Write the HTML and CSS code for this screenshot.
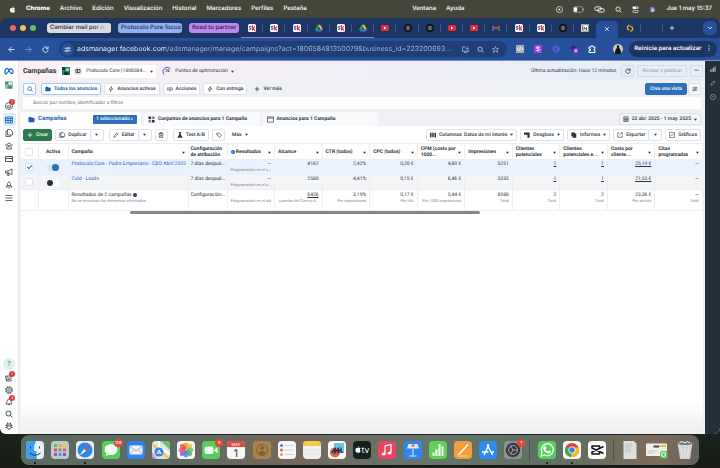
FILE: index.html
```html
<!DOCTYPE html>
<html lang="es">
<head>
  <meta charset="UTF-8">
  <meta name="viewport" content="width=device-width, initial-scale=1.0">
  <title>Administrador de anuncios</title>
  <link rel="stylesheet" href="styles.css">
</head>
<body>
  <!-- Iconos compartidos -->
  <svg class="sprite" aria-hidden="true">
    <symbol id="apple" viewBox="0 0 16 16"><path fill="currentColor" d="M11 1c0 2-1.400 3-3 3 0-2 1.500-3 3-3zM8 5c1 0 1.500-.8 3-.8 1.200 0 2.200.6 2.800 1.500-2.500 1.500-2 5 .5 6-.7 1.800-2 3.500-3.300 3.500-1 0-1.500-.6-2.700-.6s-1.700.6-2.600.6C3.500 15.200 2 11.800 2 9.300 2 6 4 4.200 6 4.200c1 0 1.500.8 2 .8z"/></symbol>
    <symbol id="caret" viewBox="0 0 8 8"><path fill="currentColor" d="M0 2h8L4 7z"/></symbol>
    <symbol id="lupa" viewBox="0 0 16 16"><g fill="none" stroke="currentColor" stroke-width="2"><circle cx="7" cy="7" r="5"/><path d="M11 11l4 4"/></g></symbol>
    <symbol id="carpeta" viewBox="0 0 16 16"><path fill="currentColor" d="M1 4q0-2 2-2h4l2 2h4q2 0 2 2v6q0 2-2 2H3q-2 0-2-2z"/></symbol>
    <symbol id="rayo" viewBox="0 0 16 16"><path fill="none" stroke="currentColor" stroke-width="1.500" d="M9 1L3 9h4l-1 6 7-8H9z"/></symbol>
    <symbol id="sk" viewBox="0 0 16 16"><rect width="16" height="16" rx="3" fill="#fff"/><path d="M7 5Q2 3 2 6t4 2q2 3-4 3" fill="none" stroke="#3d55b8" stroke-width="2"/><path d="M9 2v11M14 5l-4 4 4 4" fill="none" stroke="#e0374a" stroke-width="2.200"/></symbol>
    <symbol id="drive" viewBox="0 0 16 16"><path fill="#f5bd26" d="M5.500 1.500h5L16 11h-5z"/><path fill="#22a45a" d="M5.500 1.500L8 6l-5 9-3-4z"/><path fill="#3c7de8" d="M5 11h11l-3 4H3z"/></symbol>
    <symbol id="youtube" viewBox="0 0 16 16"><rect y="2" width="16" height="12" rx="3" fill="#ee2737"/><path fill="#fff" d="M6 5l5 3-5 3z"/></symbol>
    <symbol id="gpt" viewBox="0 0 16 16"><circle cx="8" cy="8" r="8" fill="#0d1014"/><g fill="none" stroke="#a9adb0"><circle cx="8" cy="8" r="4"/><path d="M5 5l6 6M11 5l-6 6M8 4v8"/></g></symbol>
    <symbol id="gmail" viewBox="0 0 16 16"><path fill="none" stroke="#3c7de8" stroke-width="3" d="M2 14V5"/><path fill="none" stroke="#22a45a" stroke-width="3" d="M14 14V5"/><path fill="none" stroke="#ea4335" stroke-width="3" d="M1.500 4L8 9l6.500-5"/></symbol>
    <symbol id="notion" viewBox="0 0 16 16"><rect width="16" height="16" rx="2" fill="#ddd"/><path d="M3 2l10-1 2 3v10l-10 1-2-3z" fill="#fff" stroke="#222"/><path d="M6 12V6l5 6V6" fill="none" stroke="#222" stroke-width="1.500"/></symbol>
    <symbol id="refrescar" viewBox="0 0 16 16"><path fill="none" stroke="currentColor" stroke-width="2" d="M13 5a6 6 0 1 0 1 4M14 1v5H9"/></symbol>
    <symbol id="mas" viewBox="0 0 16 16"><path stroke="currentColor" stroke-width="2" d="M8 2v12M2 8h12"/></symbol>
    <symbol id="equis" viewBox="0 0 16 16"><path stroke="currentColor" stroke-width="2" d="M3 3l10 10M13 3L3 13"/></symbol>
    <symbol id="lapiz" viewBox="0 0 16 16"><path fill="none" stroke="currentColor" stroke-width="1.500" d="M2 14l1-4 8-8 3 3-8 8zM9 4l3 3"/></symbol>
    <symbol id="ajustes" viewBox="0 0 16 16"><g fill="none" stroke="currentColor" stroke-width="1.800"><path d="M1 5h7M12 5h3M1 11h3M8 11h7"/><circle cx="10" cy="5" r="2"/><circle cx="6" cy="11" r="2"/></g></symbol>
    <symbol id="grafico" viewBox="0 0 16 16"><path fill="none" stroke="currentColor" stroke-width="1.500" d="M1 1h14v14H1zM4 11l3-4 2 2 4-5"/></symbol>
    <symbol id="calendario" viewBox="0 0 16 16"><path fill="none" stroke="currentColor" stroke-width="1.500" d="M2 2h12v13H2zM2 6h12M2 10h12M6 6v9M10 6v9"/></symbol>
    <symbol id="paginas" viewBox="0 0 16 16"><path fill="none" stroke="currentColor" stroke-width="1.700" d="M5 1h6l4 4v7H5zM5 4H2v11h9v-3"/></symbol>
  </svg>

  <header class="menubar">
    <svg class="ic"><use href="#apple"/></svg>
    <nav class="menu-izq">
      <b>Chrome</b><span>Archivo</span><span>Edición</span><span>Visualización</span><span>Historial</span><span>Marcadores</span><span>Perfiles</span><span>Pestaña</span>
    </nav>
    <nav class="menu-der"><span>Ventana</span><span>Ayuda</span></nav>
    <div class="menu-estado">
      <svg class="ic" viewBox="0 0 16 16"><circle cx="8" cy="8" r="7" fill="none" stroke="#fff" stroke-width="1.500"/><path fill="#fff" d="M6 5l5 3-5 3z"/></svg>
      <svg class="ic-ancho" viewBox="0 0 24 14"><rect x="1" y="1" width="20" height="12" rx="3" fill="none" stroke="#aaa" stroke-width="1.500"/><rect x="2" y="2" width="7" height="10" rx="2" fill="#fff"/><path d="M23 5v4" stroke="#aaa" stroke-width="2"/></svg>
      <svg class="ic-ancho" viewBox="0 0 24 16"><g fill="none" stroke="#fff" stroke-width="2"><rect x="1" y="2" width="15" height="8" rx="4"/><rect x="8" y="6" width="15" height="8" rx="4"/></g></svg>
      <svg class="ic"><use href="#lupa"/></svg>
      <svg class="ic" viewBox="0 0 16 16"><rect x="1" y="1" width="14" height="6" rx="3" fill="#fff"/><rect x="2" y="10" width="12" height="5" rx="2" fill="none" stroke="#fff" stroke-width="1.500"/><circle cx="11" cy="4" r="2" fill="#555"/></svg>
      <svg class="ic" viewBox="0 0 16 16"><circle cx="8" cy="8" r="7" fill="#4c5a9c"/><path fill="#e45a8e" d="M2 5q6-6 12 2L8 9z"/><path fill="#62d5dc" d="M3 12l5-5 6 3q-5 7-11 2z"/><circle cx="8" cy="8" r="2" fill="#fff"/></svg>
      <time>Jue 1 may 15:37</time>
    </div>
  </header>

  <div class="ventana">
    <div class="pestanas">
      <div class="semaforo"><i class="rojo"></i><i class="amarillo"></i><i class="verde"></i></div>
      <div class="grupos">
        <span class="grupo gris">Cambiar mail por otro</span>
        <span class="grupo azul">Protocolo Pure focus</span>
        <span class="grupo lila">Road to partner</span>
      </div>
      <div class="lista-pestanas">
        <span class="pes en-grupo"><svg><use href="#sk"/></svg></span>
        <span class="pes en-grupo"><svg><use href="#sk"/></svg></span>
        <span class="pes en-grupo"><svg><use href="#sk"/></svg></span>
        <span class="pes en-grupo"><svg><use href="#drive"/></svg></span>
        <span class="pes en-grupo"><svg><use href="#sk"/></svg></span>
        <span class="pes en-grupo"><svg><use href="#drive"/></svg></span>
        <span class="pes"><svg><use href="#youtube"/></svg></span>
        <span class="pes"><svg><use href="#gpt"/></svg></span>
        <span class="pes"><svg><use href="#gpt"/></svg></span>
        <span class="pes"><svg><use href="#youtube"/></svg></span>
        <span class="pes"><svg><use href="#youtube"/></svg></span>
        <span class="pes"><svg><use href="#gmail"/></svg></span>
        <span class="pes"><svg><use href="#sk"/></svg></span>
        <span class="pes"><svg><use href="#sk"/></svg></span>
        <span class="pes"><svg><use href="#gpt"/></svg></span>
        <span class="pes sin-linea"><svg><use href="#notion"/></svg></span>
        <span class="pes activa"><button aria-label="Cerrar pestaña"><svg><use href="#equis"/></svg></button></span>
        <span class="pes"><svg viewBox="0 0 16 16"><path fill="none" stroke="#e9b62c" stroke-width="2.500" d="M7 2L3 5v5l4 2M8 4l5 3v5l-4 3"/></svg></span>
        <span class="pes"></span>
      </div>
      <button class="nueva" aria-label="Nueva pestaña"><svg><use href="#mas"/></svg></button>
      <button class="buscar-pes" aria-label="Buscar pestañas"><svg viewBox="0 0 16 16"><path fill="none" stroke="currentColor" stroke-width="2.500" d="M3 5l5 5 5-5"/></svg></button>
    </div>

    <div class="barra">
      <button aria-label="Atrás"><svg viewBox="0 0 16 16"><path fill="none" stroke="currentColor" stroke-width="2" d="M15 8H2M8 2L2 8l6 6"/></svg></button>
      <button class="apagado" aria-label="Adelante"><svg viewBox="0 0 16 16"><path fill="none" stroke="currentColor" stroke-width="2" d="M1 8h13M8 2l6 6-6 6"/></svg></button>
      <button aria-label="Recargar"><svg><use href="#refrescar"/></svg></button>
      <div class="direccion">
        <span class="info"><svg><use href="#ajustes"/></svg></span>
        <input class="url" type="text" aria-label="Dirección" value="adsmanager.facebook.com/adsmanager/manage/campaigns?act=180658481350079&amp;business_id=22320069388...">
        <svg viewBox="0 0 16 16"><path fill="none" stroke="currentColor" stroke-width="1.700" d="M8 2H1v10h14V9M5 15h6M12 1v6M9 5l3 3 3-3"/></svg>
        <svg><use href="#lupa"/></svg>
        <svg viewBox="0 0 16 16"><path fill="none" stroke="currentColor" stroke-width="1.500" d="M8 1l2 5h5l-4 3 2 6-5-4-5 4 2-6-4-3h5z"/></svg>
      </div>
      <div class="extensiones">
        <svg viewBox="0 0 16 16"><rect width="16" height="16" rx="1" fill="#a9b0b8"/><path d="M5 5L2 8l3 3M11 5l3 3-3 3M9 4l-2 8" fill="none" stroke="#fff" stroke-width="1.500"/></svg>
        <svg viewBox="0 0 16 16"><rect width="16" height="16" rx="2" fill="#9a4be0"/><path d="M11 5Q5 2 5 6q6 2 6 4-1 3-6 1" fill="none" stroke="#fff" stroke-width="2"/></svg>
        <svg viewBox="0 0 16 16"><circle cx="8" cy="8" r="5" fill="none" stroke="#5560e6" stroke-width="5" stroke-dasharray="3 1"/></svg>
        <svg viewBox="0 0 16 16"><path fill="#32209a" d="M7 0l7 6-7 6-7-6z"/><rect x="7" y="7" width="9" height="9" rx="2" fill="#9c42c9"/><path fill="none" stroke="#fff" d="M10 9.500h3v4h-3zM10 11.500h3"/></svg>
        <svg viewBox="0 0 16 16"><path fill="none" stroke="#fff" stroke-width="2" d="M2 4h4V2h4v2h4v4h-2v3h2v4H2v-4h3V8H2z"/></svg>
      </div>
      <svg class="perfil" viewBox="0 0 20 20"><circle cx="10" cy="10" r="10" fill="#cfc7b8"/><path d="M4 19q0-9 4-11-1-6 2-6t2 6q4 2 4 11-6 2-12 0z" fill="#15171a"/></svg>
      <button class="reiniciar">Reinicia para actualizar <span>⋮</span></button>
    </div>

    <div class="pagina">
      <aside class="lateral">
        <div class="grupo-lat">
          <svg class="meta" viewBox="0 0 20 14"><path fill="none" stroke="#1769e0" stroke-width="2.500" d="M2 10C2 0 7 0 10 6s8 8 8 3-4-10-8-3-8 9-8 4z"/></svg>
          <svg class="avatar" viewBox="0 0 16 16"><rect width="16" height="16" rx="2" fill="#9fcabb"/><path fill="#4c8a79" d="M0 2h6v5H0zM5 9h9v6H5z"/><path fill="#e4f2ea" d="M8 3h6v4H8z"/></svg>
        </div>
        <div class="grupo-lat crece">
          <span class="con-globo"><svg viewBox="0 0 16 16"><g fill="none" stroke="currentColor" stroke-width="1.700"><circle cx="8" cy="8" r="7"/><path d="M4 8h8q-1 4-4 4t-4-4z"/></g></svg><em>1</em></span>
          <span class="marcado"><svg viewBox="0 0 16 16"><path fill="none" stroke="currentColor" stroke-width="1.700" d="M1 2h14v12H1zM1 5h14M1 9h14M6 5v9M11 5v9"/></svg></span>
          <svg><use href="#paginas"/></svg>
          <svg viewBox="0 0 16 16"><g fill="none" stroke="currentColor" stroke-width="1.700"><circle cx="8" cy="5" r="3"/><path d="M3 14q0-5 5-5t5 5zM3 9Q0 5 3 4M13 9q3-4 0-5"/></g></svg>
          <svg viewBox="0 0 16 16"><path fill="none" stroke="currentColor" stroke-width="2" d="M1 3h14v10H1zM1 7h14"/></svg>
          <svg viewBox="0 0 16 16"><path fill="none" stroke="currentColor" stroke-width="1.700" d="M1 6h5l8-4v11l-8-3H1zM4 10l1 5h3l-1-5M6 6v4"/></svg>
          <svg viewBox="0 0 16 16"><path fill="none" stroke="currentColor" stroke-width="1.700" d="M8 1q4 3 3 8H5Q4 4 8 1zM5 8l-3 4h4M11 8l3 4h-4M8 10v5"/></svg>
          <svg viewBox="0 0 16 16"><path stroke="currentColor" stroke-width="1.700" d="M1 3h14M1 8h14M1 13h14"/></svg>
        </div>
        <div class="grupo-lat abajo">
          <span class="ayuda">?</span>
          <span class="con-globo"><svg viewBox="0 0 16 16"><path fill="none" stroke="currentColor" stroke-width="1.700" d="M1 4h11v10H3zM4 4v10M6 8h4M6 11h4"/></svg><em>1</em></span>
          <svg viewBox="0 0 16 16"><g fill="none" stroke="currentColor"><circle cx="8" cy="8" r="6.500" stroke-width="2.500" stroke-dasharray="3.500 1.500"/><circle cx="8" cy="8" r="5"/><circle cx="8" cy="8" r="2.500" stroke-width="1.500"/></g></svg>
          <span class="con-globo"><svg viewBox="0 0 16 16"><path fill="none" stroke="currentColor" stroke-width="1.700" d="M2 12q2-2 2-6 1-4 4-4t4 4q0 4 2 6zM6 12q2 4 4 0"/></svg><em>4</em></span>
          <svg><use href="#lupa"/></svg>
          <svg viewBox="0 0 16 16"><path fill="none" stroke="currentColor" stroke-width="2" d="M4 4h8v7q-4 7-8 0zM4 7H1M15 7h-3M4 11H1M15 11h-3M5 4V1M11 4V1M4 8h8"/></svg>
        </div>
      </aside>

      <main>
        <div class="cabecera">
          <h1>Campañas</h1>
          <div class="cuenta">
            <svg class="avatar" viewBox="0 0 16 16"><rect width="16" height="16" fill="#2b8069"/><path fill="#0d3b33" d="M0 0h6v6H0zM4 10h9v6H4z"/><path fill="#a8e0c8" d="M7 3h7v5H9z"/></svg>
            <svg viewBox="0 0 16 16"><circle cx="8" cy="8" r="8" fill="#e1e4e8"/><path fill="none" stroke="#333" stroke-width="1.500" d="M4 5h8v6H4zM7 5v6"/></svg>
            <select aria-label="Cuenta publicitaria"><option>Protocolo Core (1806584...</option></select>
            <svg class="caret"><use href="#caret"/></svg>
          </div>
          <div class="puntos">
            <span class="nota"><svg viewBox="0 0 20 20"><path fill="none" stroke="#2b63c9" stroke-width="2" d="M4 17A8.500 8.500 0 1 1 17 6"/></svg><b>76</b></span>
            Puntos de optimización <svg class="caret"><use href="#caret"/></svg>
          </div>
          <span class="actualizado">Última actualización: Hace 12 minutos</span>
          <button class="btn cuadrado" aria-label="Actualizar"><svg><use href="#refrescar"/></svg></button>
          <button class="btn publicar" disabled>Revisar y publicar</button>
          <button class="btn cuadrado" aria-label="Más opciones">•••</button>
        </div>

        <div class="filtros">
          <button class="btn cuadrado borde-azul" aria-label="Buscar"><svg><use href="#lupa"/></svg></button>
          <button class="btn borde-azul elegido"><svg><use href="#carpeta"/></svg>Todos los anuncios</button>
          <button class="btn"><svg><use href="#rayo"/></svg>Anuncios activos</button>
          <button class="btn"><svg viewBox="0 0 16 16"><g fill="none" stroke="currentColor" stroke-width="1.500"><path d="M3 13Q0 8 3 3M13 13q3-5 0-10"/><circle cx="8" cy="7" r="3"/><path d="M8 8v7"/></g></svg>Acciones</button>
          <button class="btn"><svg><use href="#rayo"/></svg>Con entrega</button>
          <button class="btn plano"><svg><use href="#mas"/></svg>Ver más</button>
          <button class="btn primario derecha">Crea una vista</button>
          <button class="btn cuadrado pegado" aria-label="Personalizar"><svg><use href="#ajustes"/></svg></button>
        </div>

        <input class="buscador" type="search" aria-label="Buscar" placeholder="Buscar por nombre, identificador o filtros">

        <div class="niveles">
          <div class="nivel actual"><svg><use href="#carpeta"/></svg>Campañas <button class="seleccion">1 seleccionado <svg><use href="#equis"/></svg></button></div>
          <div class="nivel"><svg viewBox="0 0 16 16"><path fill="currentColor" d="M1 1h6v6H1zM9 9h6v6H9z"/><path fill="none" stroke="currentColor" stroke-width="1.500" d="M10 2h4v4h-4zM2 10h4v4H2z"/></svg>Conjuntos de anuncios para 1 Campaña</div>
          <div class="nivel"><svg viewBox="0 0 16 16"><path fill="none" stroke="currentColor" stroke-width="1.500" d="M1 2h14v12H1zM1 5h14"/></svg>Anuncios para 1 Campaña</div>
          <button class="btn fechas"><svg><use href="#calendario"/></svg>22 abr. 2025 - 1 may. 2025 <svg class="caret"><use href="#caret"/></svg></button>
        </div>

        <div class="panel">
          <div class="acciones">
            <button class="btn crear"><svg><use href="#mas"/></svg>Crear</button>
            <div class="doble">
              <button class="btn"><svg><use href="#paginas"/></svg>Duplicar</button><button class="btn" aria-label="Opciones de duplicar"><svg class="caret"><use href="#caret"/></svg></button>
            </div>
            <div class="doble separado">
              <button class="btn"><svg><use href="#lapiz"/></svg>Editar</button><button class="btn" aria-label="Opciones de editar"><svg class="caret"><use href="#caret"/></svg></button>
            </div>
            <button class="btn cuadrado" aria-label="Eliminar"><svg viewBox="0 0 16 16"><path fill="none" stroke="currentColor" stroke-width="1.700" d="M2 4h12M6 4V1h4v3M3 4l1 11h8l1-11M7 7v5M9 7v5"/></svg></button>
            <button class="btn separado"><svg viewBox="0 0 16 16"><path fill="currentColor" d="M5 0h6v2h-1v4l5 9H1l5-9V2H5z"/></svg>Test A/B</button>
            <button class="btn cuadrado" aria-label="Etiquetas"><svg viewBox="0 0 16 16"><path fill="none" stroke="currentColor" stroke-width="1.500" d="M2 3h7l6 6-5 5-8-6z"/><circle cx="5" cy="6" r="1" fill="currentColor"/></svg></button>
            <button class="btn plano">Más <svg class="caret"><use href="#caret"/></svg></button>
            <button class="btn derecha"><svg viewBox="0 0 16 16"><path fill="currentColor" d="M0 2h4v12H0zM6 2h4v12H6zM12 2h4v12h-4z"/></svg>Columnas: Datos de mi interés <svg class="caret"><use href="#caret"/></svg></button>
            <button class="btn"><svg viewBox="0 0 16 16"><path fill="currentColor" d="M0 1h15v14h-6V7H0z"/></svg>Desglose <svg class="caret"><use href="#caret"/></svg></button>
            <button class="btn"><svg viewBox="0 0 16 16"><path fill="currentColor" d="M1 1h9v3h4v11H5v-3H1z"/></svg>Informes <svg class="caret"><use href="#caret"/></svg></button>
            <div class="doble">
              <button class="btn"><svg viewBox="0 0 16 16"><path fill="none" stroke="currentColor" stroke-width="1.500" d="M7 2H2v12h12V9M10 2h4v4M14 2L7 9"/></svg>Exportar</button><button class="btn" aria-label="Opciones de exportar"><svg class="caret"><use href="#caret"/></svg></button>
            </div>
            <button class="btn"><svg><use href="#grafico"/></svg>Gráficos</button>
          </div>

          <table>
            <colgroup>
              <col class="c-marca"><col class="c-activa"><col class="c-nombre"><col class="c-config"><col span="10">
            </colgroup>
            <thead>
              <tr>
                <th><input type="checkbox" class="casilla" aria-label="Seleccionar todo"></th>
                <th class="centro">Activa</th>
                <th class="orden">Campaña<svg class="caret"><use href="#caret"/></svg></th>
                <th class="fija">Configuración de atribución</th>
                <th class="orden"><i class="punto-info">i</i> Resultados<svg class="caret"><use href="#caret"/></svg></th>
                <th class="orden">Alcance<svg class="caret"><use href="#caret"/></svg></th>
                <th class="orden">CTR (todos)<svg class="caret"><use href="#caret"/></svg></th>
                <th class="orden">CPC (todos)<svg class="caret"><use href="#caret"/></svg></th>
                <th class="orden">CPM (costo por<br>1000...<svg class="caret"><use href="#caret"/></svg></th>
                <th class="orden">Impresiones<svg class="caret"><use href="#caret"/></svg></th>
                <th class="orden">Clientes<br>potenciales<svg class="caret"><use href="#caret"/></svg></th>
                <th class="orden">Clientes<br>potenciales e...<svg class="caret"><use href="#caret"/></svg></th>
                <th class="orden">Costo por<br>cliente...<svg class="caret"><use href="#caret"/></svg></th>
                <th class="orden">Citas<br>programadas<svg class="caret"><use href="#caret"/></svg></th>
              </tr>
            </thead>
            <tbody>
              <tr class="fila-marcada">
                <td><input type="checkbox" class="casilla" aria-label="Seleccionar Protocolo Core" checked></td>
                <td><input type="checkbox" role="switch" class="interruptor" aria-label="Activar Protocolo Core" checked></td>
                <td><a href="#">Protocolo Core - Padre Empresario - CBO Abril 2025</a></td>
                <td class="fija">7 días despué...</td>
                <td class="num">—<small class="izq">Programación en el s...</small></td>
                <td class="num">4167</td><td class="num">2,42%</td><td class="num">0,20 €</td><td class="num">4,80 €</td><td class="num">5251</td>
                <td class="num"><u>1</u></td><td class="num"><u>1</u></td><td class="num"><u>25,19 €</u></td><td class="num">—</td>
              </tr>
              <tr class="fila-gris">
                <td><input type="checkbox" class="casilla" aria-label="Seleccionar Cold - Leads"></td>
                <td><input type="checkbox" role="switch" class="interruptor" aria-label="Activar Cold - Leads"></td>
                <td><a href="#">Cold - Leads</a></td>
                <td class="fija">7 días despué...</td>
                <td class="num">—<small class="izq">Programación en el s...</small></td>
                <td class="num">2560</td><td class="num">4,41%</td><td class="num">0,15 €</td><td class="num">6,46 €</td><td class="num">3335</td>
                <td class="num"><u>1</u></td><td class="num"><u>1</u></td><td class="num"><u>21,53 €</u></td><td class="num">—</td>
              </tr>
            </tbody>
            <tfoot>
              <tr>
                <td></td><td></td>
                <td>Resultados de 2 campañas <i class="punto-info oscuro">i</i><small>No se muestran los elementos eliminados</small></td>
                <td class="fija">Configuración...</td>
                <td class="num">&nbsp;<small>Programación en el siti</small></td>
                <td class="num"><u>6426</u><small>cuentas del Centro d...</small></td>
                <td class="num">3,19%<small>Por impresiones</small></td>
                <td class="num">0,17 €<small>Por clic</small></td>
                <td class="num">5,44 €<small>Por 1000 impresiones</small></td>
                <td class="num">8586<small>Total</small></td>
                <td class="num">2<small>Total</small></td>
                <td class="num">2<small>Total</small></td>
                <td class="num">23,36 €<small>Por acción</small></td>
                <td class="num">—<small>Total</small></td>
              </tr>
            </tfoot>
          </table>
          <div class="desplazamiento"><i></i></div>
        </div>
      </main>

      <aside class="herramientas">
        <svg viewBox="0 0 16 16"><path fill="currentColor" d="M0 10h3v5H0zM4 7h3v8H4zM8 4h3v11H8zM12 1h3v14h-3z"/></svg>
        <svg><use href="#lapiz"/></svg>
        <svg viewBox="0 0 16 16"><g fill="none" stroke="currentColor" stroke-width="1.500"><circle cx="8" cy="8" r="7"/><path d="M4 4l4 4h4"/></g></svg>
      </aside>
    </div>
  </div>

  <footer class="dock">
    <span class="app abierta"><svg viewBox="0 0 36 36"><rect width="36" height="36" rx="8" fill="#e9eef4"/><path fill="#3aa0f2" d="M8 0h12q-5 9-4 20h5q-1 9 1 16H8q-8 0-8-8V8q0-8 8-8z"/><path fill="none" stroke="#24384f" stroke-width="2" d="M9 11v4M27 11v4M7 24q11 9 22 0"/></svg></span>
    <span class="app"><svg viewBox="0 0 36 36"><rect width="36" height="36" rx="8" fill="#c3c9c8"/><g stroke-width="6"><path stroke="#54bd5d" d="M6 9h6"/><path stroke="#f2a53c" d="M15 9h6"/><path stroke="#f0c93f" d="M24 9h6"/><path stroke="#e2514f" d="M6 18h6"/><path stroke="#8d8d93" d="M15 18h6"/><path stroke="#ef5b6d" d="M24 18h6"/><path stroke="#8f55d6" d="M6 27h6"/><path stroke="#3da4e8" d="M15 27h6"/><path stroke="#3c77e0" d="M24 27h6"/></g></svg></span>
    <span class="app abierta"><svg viewBox="0 0 36 36"><rect width="36" height="36" rx="8" fill="#e9edf0"/><circle cx="18" cy="18" r="15" fill="#2b8ae6"/><path fill="#f2483e" d="M29 7L16 16l4 4z"/><path fill="#fff" d="M7 29l9-13 4 4z"/></svg></span>
    <span class="app"><svg viewBox="0 0 36 36"><rect width="36" height="36" rx="8" fill="#55cf59"/><ellipse cx="18" cy="17" rx="13" ry="11" fill="#f5fff5"/><path fill="#f5fff5" d="M9 24l-2 6 8-3z"/></svg><em>126</em></span>
    <span class="app"><svg viewBox="0 0 36 36"><rect width="36" height="36" rx="8" fill="#2f86ee"/><rect x="5" y="9" width="26" height="18" rx="2" fill="#eef3f8"/><path d="M5 10l13 10 13-10M5 27l9-10M31 27l-9-10" fill="none" stroke="#8b9aaa" stroke-width="1.500"/></svg></span>
    <span class="app"><svg viewBox="0 0 36 36"><rect width="36" height="36" rx="8" fill="#dfe5df"/><path fill="#62c566" d="M12 0h16q8 0 8 8v10L20 2z"/><path fill="#e58bc7" d="M0 22l10 14H8q-8 0-8-8z"/><path fill="none" stroke="#f3c84b" stroke-width="5" d="M2 8l30 26"/><path fill="none" stroke="#fff" stroke-width="4" d="M14 0v12l22 14"/><circle cx="14" cy="22" r="9" fill="#2f86ee"/><path d="M10 26l4-8 4 8M11 24h6" fill="none" stroke="#fff" stroke-width="2"/></svg></span>
    <span class="app"><svg viewBox="0 0 36 36"><rect width="36" height="36" rx="8" fill="#f8f8f6"/><g fill-opacity=".85"><ellipse cx="18" cy="10" rx="5" ry="7" fill="#f39a33"/><ellipse cx="24" cy="12" rx="5" ry="7" fill="#dfc937" transform="rotate(45 24 12)"/><ellipse cx="26" cy="18" rx="7" ry="5" fill="#8cc152"/><ellipse cx="24" cy="24" rx="5" ry="7" fill="#43b488" transform="rotate(-45 24 24)"/><ellipse cx="18" cy="26" rx="5" ry="7" fill="#4b8fdd"/><ellipse cx="12" cy="24" rx="5" ry="7" fill="#8b62c9" transform="rotate(45 12 24)"/><ellipse cx="10" cy="18" rx="7" ry="5" fill="#d85d9c"/><ellipse cx="12" cy="12" rx="5" ry="7" fill="#e95445" transform="rotate(-45 12 12)"/></g></svg></span>
    <span class="app"><svg viewBox="0 0 36 36"><rect width="36" height="36" rx="8" fill="#55cf59"/><rect x="5" y="11" width="18" height="15" rx="4" fill="#effbef"/><path fill="#effbef" d="M25 17l6-5v13l-6-5z"/></svg><em>5</em></span>
    <span class="app"><svg viewBox="0 0 36 36"><rect width="36" height="36" rx="8" fill="#f7f7f7"/><path fill="#e24a41" d="M8 0h20q8 0 8 8v4H0V8q0-8 8-8z"/><text x="18" y="9" font-size="8" fill="#fff" text-anchor="middle">MAY</text><text x="18" y="32" font-size="21" fill="#333" text-anchor="middle">1</text></svg></span>
    <span class="app"><svg viewBox="0 0 36 36"><rect width="36" height="36" rx="8" fill="#a98249"/><circle cx="18" cy="18" r="11" fill="none" stroke="#7f5f32" stroke-width="2"/><circle cx="18" cy="14" r="4" fill="#7f5f32"/><path fill="#7f5f32" d="M10 25q8-11 16 0-8 6-16 0z"/><path stroke="#5fae73" stroke-width="2" d="M35 8v5M35 24v5"/></svg></span>
    <span class="app"><svg viewBox="0 0 36 36"><rect width="36" height="36" rx="8" fill="#f7f7f7"/><path stroke="#d2d2d2" stroke-width="2" d="M13 9h19M13 18h19M13 27h19"/><circle cx="7" cy="9" r="3" fill="#3d7fe8"/><circle cx="7" cy="18" r="3" fill="#e55a4f"/><circle cx="7" cy="27" r="3" fill="#f29a3a"/></svg></span>
    <span class="app"><svg viewBox="0 0 36 36"><rect width="36" height="36" rx="8" fill="#efefed"/><path fill="#f5cb45" d="M8 0h20q8 0 8 8v2H0V8q0-8 8-8z"/><path stroke="#d5d3cc" d="M3 18h30M3 26h30"/></svg></span>
    <span class="app"><svg viewBox="0 0 36 36"><rect width="36" height="36" rx="8" fill="#fafafa"/><path fill="#6ac6e6" d="M12 4h20v18H12z"/><circle cx="14" cy="23" r="10" fill="#e9674e"/><path fill="none" stroke="#1f2f4d" stroke-width="2.500" d="M7 24l8-10-2 10 8-9-1 8 6-7v7l5-1"/></svg></span>
    <span class="app"><svg viewBox="0 0 36 36"><rect width="36" height="36" rx="8" fill="#15211f"/><use href="#apple" x="3" y="10" width="14" height="14" color="#fff"/><text x="17" y="24" font-size="17" fill="#fff">tv</text></svg></span>
    <span class="app"><svg viewBox="0 0 36 36"><rect width="36" height="36" rx="8" fill="#ea4460"/><path fill="none" stroke="#fff" stroke-width="2.500" d="M14 26V10l12-3v16"/><ellipse cx="11" cy="26" rx="4" ry="3" fill="#fff"/><ellipse cx="23" cy="24" rx="4" ry="3" fill="#fff"/></svg></span>
    <span class="app"><svg viewBox="0 0 36 36"><rect width="36" height="36" rx="8" fill="#2f86ee"/><path fill="#dceafa" d="M9 6h18l3 9H6z"/><path stroke="#dceafa" stroke-width="2" d="M18 15v14M11 30h14"/><circle cx="18" cy="9" r="3" fill="#d87a47"/></svg></span>
    <span class="app"><svg viewBox="0 0 36 36"><rect width="36" height="36" rx="8" fill="#5fd256"/><path stroke="#fff" stroke-width="4" d="M9 30v-7M15 30V17M21 30V6M27 30V11"/></svg></span>
    <span class="app"><svg viewBox="0 0 36 36"><rect width="36" height="36" rx="8" fill="#f2a03b"/><path stroke="#fff" stroke-width="3" d="M9 28L28 7"/><path stroke="#f8dbb1" stroke-width="2" d="M8 30h20"/></svg></span>
    <span class="app"><svg viewBox="0 0 36 36"><rect width="36" height="36" rx="8" fill="#2c8af0"/><path fill="none" stroke="#fff" stroke-width="3" d="M20 7L10 28M16 7l11 21M6 22h13M24 22h6"/></svg></span>
    <span class="app"><svg viewBox="0 0 36 36"><rect width="36" height="36" rx="8" fill="#8d9192"/><circle cx="18" cy="18" r="13" fill="#35393c" stroke="#24282a" stroke-width="3" stroke-dasharray="2 1"/><circle cx="18" cy="18" r="9" fill="none" stroke="#a2a6a8" stroke-width="2"/><path d="M18 18h10M18 18l-5-9M18 18l-5 9" stroke="#a2a6a8" stroke-width="2"/></svg><em>1</em></span>
    <i class="division"></i>
    <span class="app abierta"><svg viewBox="0 0 36 36"><rect width="36" height="36" rx="8" fill="#55cf59"/><path d="M6 30l2-7a12 12 0 1 1 5 5z" fill="none" stroke="#fff" stroke-width="2.500"/><path fill="#fff" d="M13 10l3 1 1 4-2 2q1 3 5 4l2-2 4 2q-1 5-6 4-9-3-10-11z"/></svg></span>
    <span class="app abierta"><svg viewBox="0 0 36 36"><rect width="36" height="36" rx="8" fill="#f7f7f7"/><circle cx="18" cy="18" r="14" fill="#e44336"/><path fill="#35a853" d="M18 18L6 11a14 14 0 0 0 10 21z"/><path fill="#fabd14" d="M18 18L16 32a14 14 0 0 0 15-19H18z"/><circle cx="18" cy="18" r="7" fill="#fff"/><circle cx="18" cy="18" r="5.500" fill="#3f80eb"/></svg></span>
    <span class="app"><svg viewBox="0 0 36 36"><rect width="36" height="36" rx="8" fill="#fafafa"/><path fill="none" stroke="#111" stroke-width="3" stroke-linejoin="round" d="M31 11L8 22v4h15v-3M31 25L8 14v-4h15v3"/></svg></span>
    <i class="division"></i>
    <span class="app"><svg viewBox="0 0 36 36"><path fill="#dfe1e1" d="M5 0h20l6 5v31H5z"/><path stroke="#9da1a2" d="M8 6h14M8 10h16M8 14h12M8 18h16M8 22h12"/></svg></span>
    <span class="app ancha"><svg viewBox="0 0 44 36"><rect y="5" width="42" height="25" rx="1" fill="#efefeb"/><path fill="#42484a" d="M15 9h11v4H15z"/><path fill="#d8c15d" d="M27 8h13v4H27z"/><path stroke="#c5c8c7" stroke-width="2" d="M3 20h20M3 24h14"/><rect x="28" y="20" width="15" height="15" rx="4" fill="#55cf59"/><circle cx="35" cy="27" r="4" fill="none" stroke="#fff" stroke-width="2"/></svg></span>
    <span class="app"><svg viewBox="0 0 36 36"><path fill="#d3d6d6" d="M3 3h30l-5 33H8z"/><ellipse cx="18" cy="4" rx="15" ry="4" fill="#727b7b"/><path stroke="#f5f5f5" stroke-width="2" fill="none" d="M7 3l5-2 5 3 6-3 5 3"/><path stroke="#f0f2f2" d="M10 12l3 20M18 12v20M26 12l-3 20"/></svg></span>
  </footer>
</body>
</html>
```

FILE: styles.css
```css
* {
  margin: 0;
  padding: 0;
  box-sizing: border-box;
}

body {
  display: flex;
  flex-direction: column;
  height: 100vh;
  overflow: hidden;
  background: linear-gradient(#44463a 0, #45473b 30px, #1c2620 90%, #171a15);
  font-family: Inter, "Liberation Sans", sans-serif;
  font-size: 5px;
  line-height: 6px;
  text-rendering: geometricPrecision;
  color: #29343d;
}

button,
input,
select {
  font: inherit;
  color: inherit;
  border: none;
  background: none;
  text-rendering: inherit;
}

svg {
  display: block;
  flex: none;
  width: 6px;
  height: 6px;
}

.sprite {
  position: absolute;
  width: 0;
  height: 0;
}

.caret {
  width: 3px;
  height: 3px;
}

/* Barra de menús */
.menubar {
  display: flex;
  align-items: center;
  height: 18px;
  flex: none;
  padding: 0 8px 0 9px;
  color: #f2f2ee;
  font-size: 6px;
  font-weight: 600;
  line-height: 8px;
}

.menubar .ic {
  width: 7px;
  height: 7px;
}

.menubar .ic-ancho {
  width: 11px;
  height: 7px;
}

.menu-izq {
  display: flex;
  gap: 10px;
  margin-left: 10px;
}

.menu-der {
  display: flex;
  gap: 10px;
  margin-left: auto;
  margin-right: 92px;
}

.menu-estado {
  display: flex;
  align-items: center;
  gap: 10px;
}

/* Ventana del navegador */
.ventana {
  display: flex;
  flex-direction: column;
  flex: 1;
  min-height: 0;
  border-radius: 7px 7px 6px 6px;
  overflow: hidden;
  background: #1b3663;
}

.pestanas {
  display: flex;
  align-items: center;
  height: 20px;
  flex: none;
  padding: 0 3px 0 10px;
  color: #fff;
}

.semaforo {
  display: flex;
  gap: 4px;
  margin-right: 11px;
}

.semaforo i {
  width: 6px;
  height: 6px;
  border-radius: 50%;
}

.rojo { background: #ee6a5f; }
.amarillo { background: #f5bd4f; }
.verde { background: #61c454; }

.grupos {
  display: flex;
  gap: 7px;
}

.grupo {
  height: 10px;
  padding: 0 3px;
  border-radius: 3px;
  color: #1f2b46;
  font-size: 6px;
  font-weight: 500;
  line-height: 10px;
  white-space: nowrap;
  overflow: hidden;
}

.gris {
  position: relative;
  width: 64px;
  background: #d7dade;
}

/* El título largo se desvanece al final */
.gris::after {
  content: "";
  position: absolute;
  top: 0;
  right: 0;
  width: 16px;
  height: 100%;
  background: linear-gradient(90deg, transparent, #d7dade 70%);
}

.azul {
  width: 64px;
  background: #8fb1f2;
}

.lila {
  width: 50px;
  background: #bd87ee;
}

.lista-pestanas {
  display: flex;
  flex: 1;
  align-self: stretch;
  align-items: flex-end;
  min-width: 0;
  margin-left: 2px;
}

.pes {
  display: flex;
  flex: 1;
  align-items: center;
  justify-content: center;
  height: 20px;
  border-bottom: 1px solid transparent;
  background: linear-gradient(#2f5795, #2f5795) right 6px / 1px 8px no-repeat;
}

.pes svg {
  width: 8px;
  height: 8px;
}

.en-grupo {
  border-bottom-color: #9a79dd;
}

.sin-linea {
  background: none;
}

.activa {
  height: 17px;
  border-radius: 5px 5px 0 0;
  background: #26509a;
}

.activa svg,
.nueva svg {
  width: 6px;
  height: 6px;
}

.nueva {
  width: 18px;
  display: flex;
  justify-content: center;
}

.buscar-pes {
  display: grid;
  place-items: center;
  width: 14px;
  height: 14px;
  margin-left: 22px;
  border-radius: 5px;
  background: #26509a;
}

.barra {
  display: flex;
  align-items: center;
  height: 22px;
  flex: none;
  padding: 0 3px 0 8px;
  background: #26509a;
  color: #eaf1ff;
}

.barra > button:not(.reiniciar) {
  width: 17px;
}

.barra svg {
  width: 7px;
  height: 7px;
}

.apagado {
  color: #7f9bd0;
}

.direccion {
  display: flex;
  flex: 1;
  align-items: center;
  gap: 8px;
  min-width: 0;
  height: 16px;
  margin-right: 9px;
  padding: 0 8px 0 2px;
  border-radius: 8px;
  background: #203f77;
  color: #b9caea;
}

.info {
  display: grid;
  place-items: center;
  width: 13px;
  height: 13px;
  border-radius: 50%;
  background: #26509a;
  color: #fff;
}

.url {
  flex: 1;
  min-width: 0;
  margin-left: -5px;
  font-size: 7px;
  line-height: 10px;
  text-overflow: ellipsis;
  color: transparent;
  background: linear-gradient(90deg, #fff 88px, #a3b8df 88px);
  background-clip: text;
  -webkit-background-clip: text;
}

.extensiones {
  display: flex;
  gap: 10px;
}

.extensiones svg {
  width: 8px;
  height: 8px;
}

.barra .perfil {
  width: 10px;
  height: 10px;
  margin: 0 6px 0 17px;
}

.reiniciar {
  height: 16px;
  padding: 0 5px;
  border-radius: 8px;
  background: #1b3663;
  color: #fff;
  font-size: 6px;
  font-weight: 600;
  white-space: nowrap;
}

.reiniciar span {
  margin-left: 3px;
}

/* Página */
.pagina {
  display: flex;
  flex: 1;
  min-height: 0;
  border-top: 1px solid #7591c6;
  font-family: Roboto, "Liberation Sans", sans-serif;
  background: #fff;
}

.lateral {
  display: flex;
  flex-direction: column;
  width: 18px;
  flex: none;
  padding: 5px 0 4px;
  color: #46525c;
}

.grupo-lat {
  display: flex;
  flex-direction: column;
  align-items: center;
  gap: 5px;
}

.lateral svg {
  width: 8px;
  height: 8px;
}

.lateral .meta {
  width: 10px;
  height: 10px;
}

.crece {
  flex: 1;
  margin-top: 13px;
}

.con-globo {
  position: relative;
}

.con-globo em {
  position: absolute;
  top: -3px;
  left: 4px;
  width: 6px;
  height: 6px;
  border-radius: 50%;
  background: #d93c3c;
  color: #fff;
  font-size: 4px;
  font-style: normal;
  text-align: center;
}

.marcado {
  display: grid;
  place-items: center;
  width: 13px;
  height: 13px;
  margin: -2px 0;
  border-radius: 2px;
  background: #dcecfb;
  color: #1d64b4;
}

.abajo {
  gap: 4px;
}

.ayuda {
  width: 12px;
  height: 12px;
  border-radius: 50%;
  background: #def2ec;
  color: #35806d;
  font-size: 7px;
  line-height: 12px;
  text-align: center;
}

main {
  display: flex;
  flex-direction: column;
  flex: 1;
  min-width: 0;
  padding: 0 2px 2px;
  background: linear-gradient(100deg, #fbeff2, #f1eef6 45%, #e7eef8 85%) top / 100% 20px no-repeat, #eff1f5;
  border-left: 1px solid #e6eaf0;
}

.btn {
  display: flex;
  align-items: center;
  justify-content: center;
  gap: 3px;
  height: 12px;
  padding: 0 3px;
  border: 1px solid #dfe3e8;
  border-radius: 2px;
  background: #fff;
  font-weight: 500;
  white-space: nowrap;
}

.btn svg:not(.caret) {
  width: 6px;
  height: 6px;
}

.btn.cuadrado {
  width: 13px;
  padding: 0;
}

.plano {
  border-color: transparent;
  background: none;
}

.derecha {
  margin-left: auto;
}

.cabecera {
  display: flex;
  align-items: center;
  gap: 3px;
  height: 20px;
  flex: none;
  padding: 0 0 0 2px;
}

h1 {
  font-size: 7px;
  line-height: 8px;
  font-weight: 700;
}

.cuenta {
  display: flex;
  align-items: center;
  gap: 4px;
  height: 13px;
  padding: 0 3px;
  border-radius: 2px;
  background: #fff;
}

.cuenta svg:not(.caret) {
  width: 8px;
  height: 8px;
}

.cuenta select {
  width: 60px;
  appearance: none;
}

.puntos {
  display: flex;
  align-items: center;
  gap: 3px;
  margin-left: 3px;
}

.nota {
  display: grid;
  place-items: center;
}

.nota > * {
  grid-area: 1 / 1;
}

.nota svg {
  width: 10px;
  height: 10px;
}

.nota b {
  font-size: 4px;
}

.actualizado {
  margin-left: auto;
  margin-right: 2px;
}

.cabecera .btn {
  background: transparent;
  border-color: #d5dce5;
}

.cabecera .publicar {
  padding: 0 4px;
  color: #a0abb7;
}

.filtros {
  display: flex;
  align-items: center;
  gap: 3px;
  height: 15px;
  flex: none;
  padding: 0 2px;
}

.borde-azul {
  border-color: #a9c9ea;
  color: #1b62b5;
}

.elegido {
  margin-left: 2px;
  font-weight: 700;
}

.primario {
  padding: 0 4px;
  border-color: #2c70b9;
  background: #2c70b9;
  color: #fff;
}

.pegado {
  margin-left: -2px;
  background: #f7f8fa;
}

.buscador {
  flex: none;
  height: 12px;
  margin: 1px 2px 3px;
  padding: 0 10px;
  border-radius: 2px;
  background: #fff;
}

.buscador::placeholder {
  color: #6d7881;
}

.niveles {
  display: flex;
  align-items: center;
  gap: 3px;
  height: 14px;
  flex: none;
  padding-right: 2px;
}

.nivel {
  display: flex;
  align-items: center;
  gap: 3px;
  width: 17%;
  height: 14px;
  padding: 0 4px;
  border-radius: 3px 3px 0 0;
  background: #f9fafc;
  font-size: 5px;
  font-weight: 700;
  white-space: nowrap;
}

.nivel > svg {
  width: 7px;
  height: 7px;
}

.actual {
  width: 120px;
  padding-left: 7px;
  background: #fff;
  color: #1b62b5;
  font-size: 6px;
}

.seleccion {
  display: flex;
  align-items: center;
  justify-content: space-between;
  width: 44px;
  height: 9px;
  margin-left: auto;
  padding: 0 3px;
  border-radius: 1px;
  background: #2c70b9;
  color: #fff;
  font-size: 5px;
  font-weight: 500;
}

.seleccion svg {
  width: 4px;
  height: 4px;
}

.fechas {
  margin-left: auto;
  background: #f3f5f8;
}

.panel {
  flex: 1;
  min-height: 0;
  background: linear-gradient(#fff 90%, #eff0f2);
}

.acciones {
  display: flex;
  align-items: center;
  gap: 3px;
  height: 17px;
  padding: 0 2px;
}

.crear {
  border-color: #2b7a4e;
  background: #2b7a4e;
  color: #fff;
}

.doble {
  display: flex;
}

.doble .btn:last-child {
  width: 14px;
  margin-left: -1px;
}

.separado {
  margin-left: 2px;
}

/* Tabla de campañas */
table {
  width: 100%;
  table-layout: fixed;
  border-collapse: collapse;
}

.c-marca { width: 17px; }
.c-activa { width: 30px; }
.c-nombre { width: 120px; }
.c-config { width: 39px; }

th,
td {
  padding: 1px 3px;
  border: 1px solid #edf0f3;
  border-width: 1px 1px 0 0;
  text-align: left;
  vertical-align: top;
  font-weight: 400;
  white-space: nowrap;
  overflow: hidden;
}

th {
  height: 16px;
  vertical-align: middle;
  font-weight: 700;
}

th.fija,
td.fija {
  padding: 1px 1px 1px 2px;
  border-left: 1px solid #d3d8dd;
}

th.fija {
  white-space: normal;
}

.centro {
  text-align: center;
}

.orden {
  position: relative;
}

.orden .caret {
  position: absolute;
  right: 3px;
  top: calc(50% - 1px);
}

td small {
  display: block;
  font-size: 4px;
  line-height: 6px;
  color: #7d8790;
}

.num {
  text-align: right;
}

td .izq {
  text-align: left;
}

tbody tr {
  height: 15px;
}

tfoot tr {
  height: 20px;
}

tfoot td,
tfoot td.fija {
  padding-top: 2px;
}

.fila-marcada {
  background: #e9f2fe;
}

.fila-gris {
  background: #f4f5f7;
}

td a {
  color: #1f5fd0;
  text-decoration: none;
}

.casilla {
  display: block;
  appearance: none;
  width: 8px;
  height: 8px;
  margin: 2px auto;
  border: 1px solid #e0e4e8;
  border-radius: 2px;
  background: #fff;
}

.casilla:checked::after {
  content: "";
  display: block;
  width: 4px;
  height: 2px;
  margin: 1px;
  border: solid #2c70b9;
  border-width: 0 0 1px 1px;
  transform: rotate(-45deg);
}

.interruptor {
  display: flex;
  align-items: center;
  appearance: none;
  width: 12px;
  height: 7px;
  margin: 3px auto 2px;
  border-radius: 4px;
  background: #fff;
}

.interruptor::before {
  content: "";
  width: 6px;
  height: 6px;
  border-radius: 50%;
  background: #26323c;
}

.interruptor:checked {
  justify-content: flex-end;
  background: #d7e6f6;
}

.interruptor:checked::before {
  width: 7px;
  height: 7px;
  background: #2c70b9;
}

.punto-info {
  display: inline-block;
  width: 4px;
  height: 4px;
  border-radius: 50%;
  background: #1f5fd0;
  color: #fff;
  font-size: 3px;
  line-height: 4px;
  text-align: center;
}

.oscuro {
  background: #26323c;
}

.desplazamiento {
  padding: 0 0 0 16%;
  border-top: 1px solid #edf0f3;
}

.desplazamiento i {
  display: block;
  width: 61%;
  height: 3px;
  border-radius: 2px;
  background: #85888b;
}

.herramientas {
  display: flex;
  flex-direction: column;
  align-items: center;
  gap: 8px;
  width: 15px;
  flex: none;
  padding-top: 5px;
  background: #22313b;
  color: #a5b0b7;
}

/* Dock */
.dock {
  display: flex;
  align-items: center;
  justify-content: space-between;
  flex: none;
  height: 30px;
  margin: 1px 21px 3px;
  padding: 0 5px;
  border-radius: 8px;
  background: linear-gradient(90deg, #5a6a60, #5f6b62 25%, #75665b 38%, #64756b 60%, #5f6f61 80%, #806a59 94%, #62625a);
}

.app {
  position: relative;
}

.app svg {
  width: 18px;
  height: 18px;
}

.ancha svg {
  width: 22px;
}

.app em {
  position: absolute;
  top: -2px;
  right: -3px;
  min-width: 8px;
  height: 8px;
  padding: 0 1px;
  border-radius: 4px;
  background: #e5473d;
  color: #fff;
  font-size: 4px;
  font-style: normal;
  line-height: 8px;
  text-align: center;
}

.abierta::after {
  content: "";
  position: absolute;
  left: 8px;
  bottom: -5px;
  width: 2px;
  height: 2px;
  border-radius: 50%;
  background: #0b0d0b;
}

.division {
  width: 1px;
  height: 22px;
  background: #4c554d;
}
```
